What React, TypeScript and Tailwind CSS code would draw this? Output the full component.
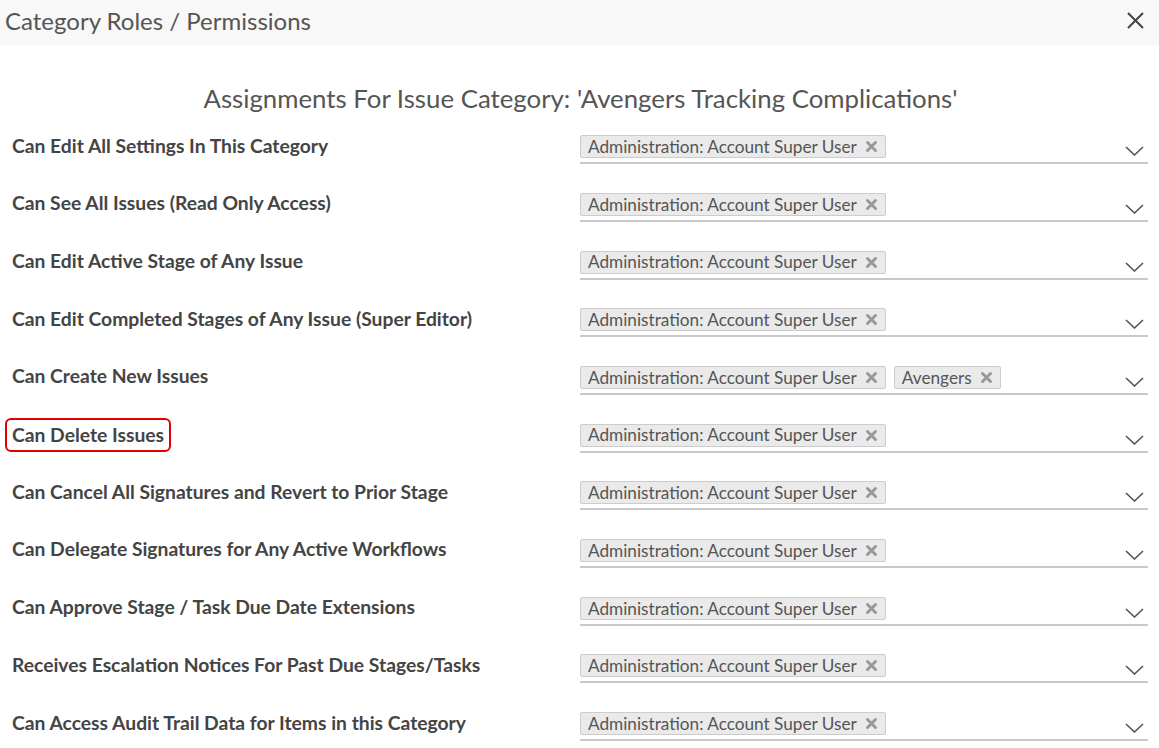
import React from "react";

interface RoleRow {
  label: string;
  roles: string[];
  highlight?: boolean;
}

const rows: RoleRow[] = [
  { label: "Can Edit All Settings In This Category", roles: ["Administration: Account Super User"] },
  { label: "Can See All Issues (Read Only Access)", roles: ["Administration: Account Super User"] },
  { label: "Can Edit Active Stage of Any Issue", roles: ["Administration: Account Super User"] },
  { label: "Can Edit Completed Stages of Any Issue (Super Editor)", roles: ["Administration: Account Super User"] },
  { label: "Can Create New Issues", roles: ["Administration: Account Super User", "Avengers"] },
  { label: "Can Delete Issues", roles: ["Administration: Account Super User"], highlight: true },
  { label: "Can Cancel All Signatures and Revert to Prior Stage", roles: ["Administration: Account Super User"] },
  { label: "Can Delegate Signatures for Any Active Workflows", roles: ["Administration: Account Super User"] },
  { label: "Can Approve Stage / Task Due Date Extensions", roles: ["Administration: Account Super User"] },
  { label: "Receives Escalation Notices For Past Due Stages/Tasks", roles: ["Administration: Account Super User"] },
  { label: "Can Access Audit Trail Data for Items in this Category", roles: ["Administration: Account Super User"] },
];

const Chip: React.FC<{ text: string }> = ({ text }) => (
  <span className="flex items-center h-[23px] pl-[7px] pr-[7px] gap-[8px] bg-[#eaeaea] border border-[#cccccc] rounded-[2px] text-[17.2px] text-[#555] leading-none">
    {text}
    <svg width="13" height="13" viewBox="0 0 13 13" className="text-[#999]">
      <path d="M2.5 2.5 L10.5 10.5 M10.5 2.5 L2.5 10.5" stroke="currentColor" strokeWidth="3" strokeLinecap="round" />
    </svg>
  </span>
);

const App: React.FC = () => {
  return (
    <div className="w-[1159px] h-[748px] bg-white overflow-hidden font-['Lato','Noto_Sans',sans-serif] text-[#444]">
      {/* header */}
      <div className="h-[45px] bg-[#f8f8f8] flex items-center justify-between pl-[5px] pr-[15px]">
        <h2 className="text-[24px] text-[#555] leading-none -mt-[3px]">Category Roles / Permissions</h2>
        <svg width="17" height="17" viewBox="0 0 17 17" className="text-[#444] -mt-[5px]">
          <path d="M1 1 L16 16 M16 1 L1 16" stroke="currentColor" strokeWidth="2" />
        </svg>
      </div>

      <div className="pt-[41px] text-center text-[25.8px] text-[#555] leading-none pl-[2px]">
        Assignments For Issue Category: 'Avengers Tracking Complications'
      </div>

      <div className="pt-[6px] pl-[12px] pr-[11px]">
        {rows.map((row) => (
          <div key={row.label} className="grid grid-cols-[568px_1fr] h-[57.7px] items-center">
            <div>
              <span
                className={`inline-block text-[19.3px] font-bold text-[#444] leading-none ${
                  row.highlight ? "-ml-[7px] px-[5px] py-[5.5px] border-2 border-[#e00000] rounded-[6px]" : ""
                }`}
              >
                {row.label}
              </span>
            </div>
            <div className="flex items-end justify-between border-b-2 border-[#c8c8c8] pb-[4px] mt-[6px]">
              <div className="flex gap-[8px]">
                {row.roles.map((r) => (
                  <Chip key={r} text={r} />
                ))}
              </div>
              <svg width="19" height="10" viewBox="0 0 19 10" className="text-[#555] mr-[4px] mb-[2px]">
                <path d="M1 1 L9.5 9 L18 1" stroke="currentColor" strokeWidth="1.6" fill="none" />
              </svg>
            </div>
          </div>
        ))}
      </div>
    </div>
  );
};

export default App;
